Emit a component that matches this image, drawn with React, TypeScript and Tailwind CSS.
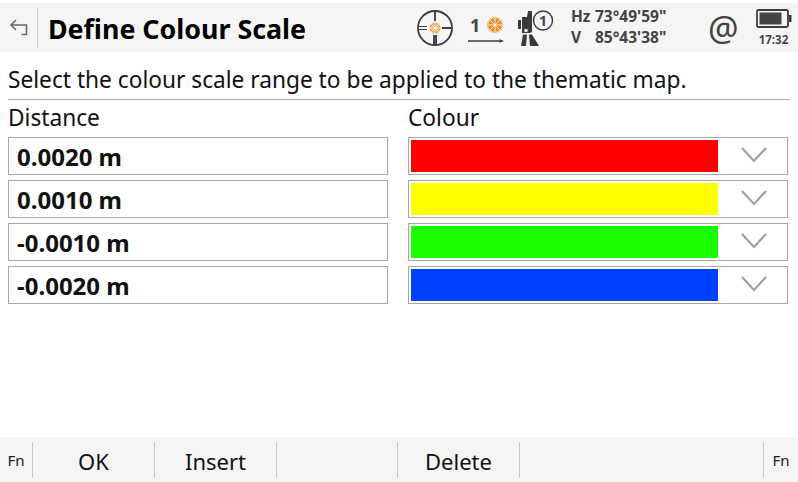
const rows = [
  { value: "0.0020 m", color: "bg-[#ff0000]" },
  { value: "0.0010 m", color: "bg-[#ffff00]" },
  { value: "-0.0010 m", color: "bg-[#19ff00]" },
  { value: "-0.0020 m", color: "bg-[#0040ff]" },
];

function BackIcon() {
  return (
    <svg width="22" height="22" viewBox="0 0 22 22" fill="none" stroke="#666" strokeWidth="1.500">
      <path d="M8 3 3 8l5 5M3 8h15.500v9.500h-5" />
    </svg>
  );
}

function TargetIcon() {
  return (
    <svg width="38" height="38" viewBox="0 0 38 38" fill="none">
      <circle cx="19" cy="19" r="17" stroke="#3c3c3c" strokeWidth="1.800" />
      <path d="M19 2v10M19 26v10M26 19h10" stroke="#3c3c3c" strokeWidth="1.800" />
      <path d="M2 17.500h9M2 20.500h9M17.500 26v10M20.500 26v10" stroke="#3c3c3c" strokeWidth="1" />
      <circle cx="19" cy="19" r="5.500" fill="#f0a860" />
      <path d="M19 14v10M14 19h10M15.500 15.500l7 7M22.500 15.500l-7 7" stroke="#fff" strokeWidth="0.800" />
    </svg>
  );
}

function PrismIcon() {
  return (
    <svg width="38" height="36" viewBox="0 0 38 36" fill="none">
      <circle cx="28" cy="15" r="7.500" fill="#ee8c22" stroke="#eac8a4" strokeWidth="1.500" />
      <path d="M28 8v14M21 15h14M23 10l10 10M33 10l-10 10" stroke="#fff" strokeWidth="0.800" />
      <path d="M1 31h34" stroke="#3c3c3c" strokeWidth="1.500" />
      <path d="M32 29l5 2-5 2 1.500-2z" fill="#3c3c3c" />
    </svg>
  );
}

function StationIcon() {
  return (
    <svg width="36" height="40" viewBox="0 0 36 40" fill="none">
      <path d="M0 12h3v9H0z" fill="#3a3a3a" />
      <path d="M4 9h5l1-6h4v21l-2 1H4z" fill="#3a3a3a" />
      <circle cx="8" cy="22.500" r="2.300" fill="#eee" stroke="#3a3a3a" />
      <path d="M5 26.500h4L8 38H3zM11 26.500h3L21 38h-9z" fill="#3a3a3a" />
      <circle cx="25" cy="12.500" r="9.500" fill="#f5f5f5" stroke="#3a3a3a" strokeWidth="1.400" />
    </svg>
  );
}

function BatteryIcon() {
  return (
    <svg width="36" height="20" viewBox="0 0 36 20" fill="none">
      <rect x="1" y="1" width="31" height="17" rx="1.500" stroke="#3c3c3c" strokeWidth="1.800" />
      <rect x="3.500" y="3.500" width="22" height="12" fill="#444" />
      <path d="M33 6h2.500v7H33z" fill="#3c3c3c" />
    </svg>
  );
}

function Chevron() {
  return (
    <svg width="26" height="16" viewBox="0 0 26 16" fill="none" stroke="#a0a0a0" strokeWidth="2.200">
      <path d="M1 1l12 13L25 1" />
    </svg>
  );
}

function SoftKey({ label, width }: { label?: string; width: string }) {
  return (
    <div className={`flex h-[36px] items-center justify-center border-r border-[#c8c8c8] pt-[3px] text-[22px] text-[#111] ${width}`}>
      {label}
    </div>
  );
}

export default function App() {
  return (
    <div className="flex h-[482px] w-[798px] flex-col overflow-hidden bg-white font-['Noto_Sans','Open_Sans',sans-serif] text-[#111]">
      <header className="mt-[3px] flex h-[49px] shrink-0 items-center bg-[#f5f5f5]">
        <div className="flex h-[40px] w-[38px] shrink-0 items-center justify-center border-r border-[#c8c8c8] pl-[1px]">
          <BackIcon />
        </div>
        <h1 className="ml-[10px] w-[368px] pt-[3px] text-[26.800px] font-bold leading-none text-black">Define Colour Scale</h1>
        <TargetIcon />
        <div className="relative ml-[13px] h-[36px] w-[38px] shrink-0">
          <PrismIcon />
          <span className="absolute left-[3px] top-[2px] text-[18px] font-bold text-[#444]">1</span>
        </div>
        <div className="relative ml-[13px] h-[40px] w-[36px] shrink-0">
          <StationIcon />
          <span className="absolute left-[21px] top-[2px] text-[14px] font-bold text-[#444]">1</span>
        </div>
        <div className="ml-[17px] mb-[2px] w-[120px] shrink-0 text-[15.500px] font-bold leading-[21px] text-[#444]">
          <div className="flex"><span className="w-[24px]">Hz</span><span>73°49'59"</span></div>
          <div className="flex"><span className="w-[24px]">V</span><span>85°43'38"</span></div>
        </div>
        <div className="ml-[17px] w-[30px] text-center text-[34px] leading-none text-[#444]">@</div>
        <div className="ml-[17px] flex w-[38px] flex-col items-center">
          <BatteryIcon />
          <span className="mt-[4px] pr-[1px] text-[11.500px] font-bold leading-[14px] text-[#444]">17:32</span>
        </div>
      </header>

      <main className="flex-1 px-[8px]">
        <p className="flex h-[48px] items-end border-b border-[#b0b0b0] pb-[4px] text-[22.700px] leading-[30px]">
          Select the colour scale range to be applied to the thematic map.
        </p>
        <div className="mt-[3px] grid h-[30px] grid-cols-[380px_380px] items-center gap-x-[20px] text-[22.700px] leading-[30px]">
          <span>Distance</span>
          <span>Colour</span>
        </div>
        <div className="mt-[4px] flex flex-col gap-[5px]">
          {rows.map((row) => (
            <div key={row.value} className="grid grid-cols-[380px_380px] gap-x-[20px]">
              <div className="flex h-[38px] items-center border border-[#a8a8a8] pl-[8px] pt-[2px] text-[24px] font-bold text-[#111]">
                {row.value}
              </div>
              <div className="flex h-[38px] items-center border border-[#a8a8a8] p-[2px]">
                <div className={`h-[32px] w-[307px] ${row.color}`} />
                <div className="flex flex-1 justify-center pb-[3px] pl-[5px]">
                  <Chevron />
                </div>
              </div>
            </div>
          ))}
        </div>
      </main>

      <footer className="flex h-[45px] shrink-0 items-center bg-[#f5f5f5]">
        <div className="flex h-[36px] w-[33px] items-center justify-center border-r border-[#c8c8c8] pt-[2px] text-[15px] text-[#222]">Fn</div>
        <SoftKey label="OK" width="w-[122px]" />
        <SoftKey label="Insert" width="w-[122px]" />
        <SoftKey width="w-[121px]" />
        <SoftKey label="Delete" width="w-[122px]" />
        <SoftKey width="w-[244px]" />
        <div className="flex h-[36px] flex-1 items-center justify-center pt-[2px] text-[15px] text-[#222]">Fn</div>
      </footer>
    </div>
  );
}
